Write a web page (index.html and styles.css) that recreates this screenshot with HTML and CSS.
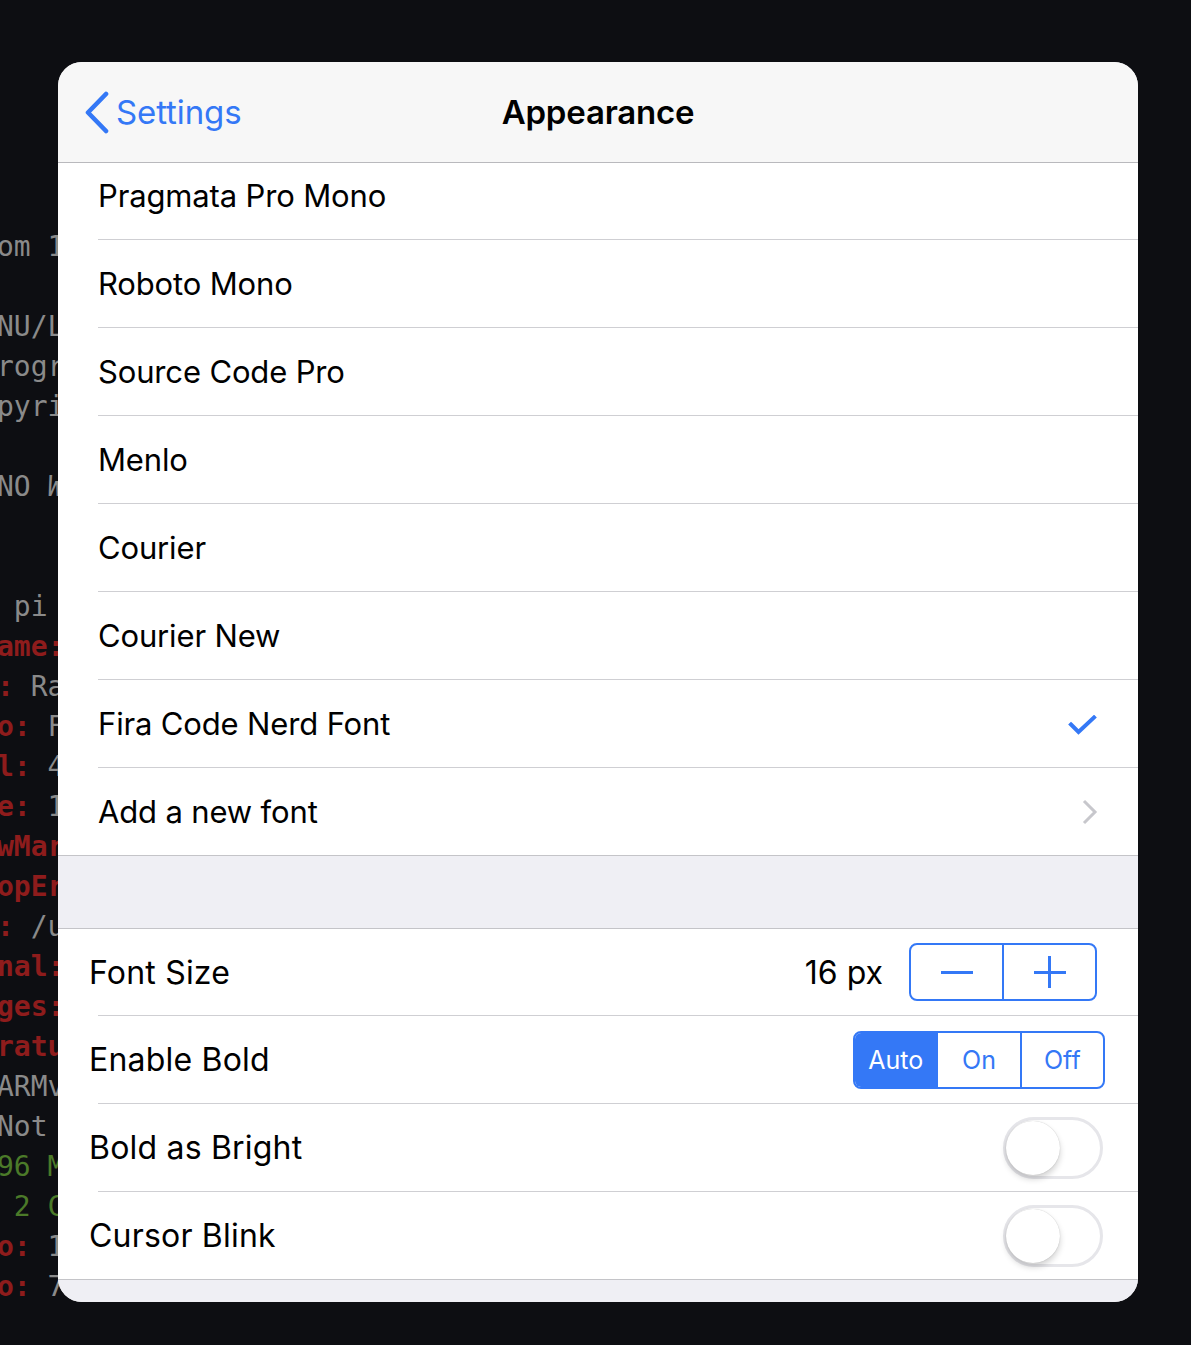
FILE: index.html
```html
<!DOCTYPE html>
<html>
<head>
<meta charset="utf-8">
<link rel="stylesheet" href="styles.css">
</head>
<body>
<div class="stage">
<div class="term"><div class="ln g">om 1</div><div class="ln"> </div><div class="ln g">NU/L</div><div class="ln g">rogr</div><div class="ln g">pyri</div><div class="ln"> </div><div class="ln g">NO <i>W</i></div><div class="ln"> </div><div class="ln"> </div><div class="ln g"> pi</div><div class="ln"><b class="r">ame:</b></div><div class="ln"><b class="r">:</b><span class="g"> Ra</span></div><div class="ln"><b class="r">o:</b><span class="g"> F</span></div><div class="ln"><b class="r">l:</b><span class="g"> 4</span></div><div class="ln"><b class="r">e:</b><span class="g"> 1</span></div><div class="ln"><b class="r">wMar</b></div><div class="ln"><b class="r">opEr</b></div><div class="ln"><b class="r">:</b><span class="g"> /u</span></div><div class="ln"><b class="r">nal:</b></div><div class="ln"><b class="r">ges:</b></div><div class="ln"><b class="r">ratu</b></div><div class="ln g">ARMv</div><div class="ln g">Not </div><div class="ln gr">96 M</div><div class="ln gr"> 2 C</div><div class="ln"><b class="r">o:</b><span class="g"> 1</span></div><div class="ln"><b class="r">o:</b><span class="g"> 7</span></div></div>

<div class="sheet">
  <div class="header">
    <div class="back">
      <svg class="back-chev" width="28" height="44" viewBox="0 0 28 44"><path d="M23 3 L5 21.5 L23 40" fill="none" stroke="#3478f6" stroke-width="4.6" stroke-linecap="round" stroke-linejoin="round"/></svg>
      <span class="back-label">Settings</span>
    </div>
    <div class="title">Appearance</div>
    <div></div>
  </div>

  <div class="list1">
    <div class="rows1">
      <div class="row"><span class="label">Pragmata Pro Mono</span></div>
      <div class="row"><span class="label">Roboto Mono</span></div>
      <div class="row"><span class="label">Source Code Pro</span></div>
      <div class="row"><span class="label">Menlo</span></div>
      <div class="row"><span class="label">Courier</span></div>
      <div class="row"><span class="label">Courier New</span></div>
      <div class="row"><span class="label">Fira Code Nerd Font</span>
        <svg class="check" width="30" height="24" viewBox="0 0 30 24"><path d="M3 9.5 L10.5 17 L26 2.5" fill="none" stroke="#3478f6" stroke-width="4" stroke-linecap="square" stroke-linejoin="miter"/></svg>
      </div>
      <div class="row last"><span class="label">Add a new font</span>
        <svg class="chev" width="18" height="28" viewBox="0 0 18 28"><path d="M3 3 L14 14 L3 25" fill="none" stroke="#c7c7cc" stroke-width="3"/></svg>
      </div>
    </div>
  </div>

  <div class="gap"></div>

  <div class="list2">
    <div class="row g2 first"><span class="label">Font Size</span>
      <span class="value">16 px</span>
      <div class="stepper">
        <div class="step"><span class="minus"></span></div>
        <div class="step"><span class="plus"></span></div>
      </div>
    </div>
    <div class="row g2"><span class="label">Enable Bold</span>
      <div class="seg">
        <div class="seg-item on">Auto</div>
        <div class="seg-item">On</div>
        <div class="seg-item">Off</div>
      </div>
    </div>
    <div class="row g2"><span class="label">Bold as Bright</span>
      <div class="switch"><span class="knob"></span></div>
    </div>
    <div class="row g2 last"><span class="label">Cursor Blink</span>
      <div class="switch"><span class="knob"></span></div>
    </div>
  </div>
  <div class="foot"></div>
</div>
</div>
</body>
</html>
```
FILE: styles.css
```css
html, body {
  margin: 0;
  padding: 0;
  background: #0d0e12;
}
.stage {
  display: grid;
  width: 1191px;
  height: 1345px;
  overflow: hidden;
  background: #0d0e12;
}
.term, .sheet {
  grid-area: 1 / 1;
}
.term {
  margin-top: 227px;
  margin-left: -3px;
  font-family: "DejaVu Sans Mono", "Liberation Mono", monospace;
  font-size: 28px;
  line-height: 40px;
  white-space: pre;
  color: #8a8a8a;
}
.term .ln { height: 40px; }
.term .g { color: #8a8a8a; }
.term .r { color: #8e1c1c; font-weight: bold; }
.term .gr { color: #4b7a29; }
.term i { font-style: italic; }

.sheet {
  align-self: start;
  justify-self: start;
  margin: 62px 0 0 58px;
  width: 1080px;
  height: 1240px;
  border-radius: 24px;
  overflow: hidden;
  background: #efeff4;
  display: flex;
  flex-direction: column;
  font-family: "Inter", "Roboto", "Liberation Sans", sans-serif;
  color: #000;
}
.header {
  height: 100px;
  flex: none;
  background: #f7f7f7;
  border-bottom: 1px solid #b9b9bd;
  display: grid;
  grid-template-columns: 1fr auto 1fr;
  align-items: center;
}
.back {
  display: flex;
  align-items: center;
  padding-left: 25px;
  color: #3478f6;
}
.back-chev { flex: none; margin-top: 1px; }
.back-label {
  font-size: 33px;
  margin-left: 5px;
  letter-spacing: -0.1px;
}
.title {
  font-size: 33px;
  font-weight: 600;
  letter-spacing: -0.2px;
  margin-top: -1px;
}
.list1 {
  height: 693px;
  flex: none;
  overflow: hidden;
  background: #fff;
}
.rows1 {
  margin-top: -11px;
}
.row {
  height: 88px;
  box-sizing: border-box;
  margin-left: 40px;
  border-bottom: 1px solid #cfcfd3;
  display: flex;
  align-items: center;
  background: #fff;
}
.row.last {
  margin-left: 0;
  padding-left: 40px;
  border-bottom-color: #c4c4c8;
}
.label {
  font-size: 31px;
  letter-spacing: -0.15px;
  flex: 1;
}
.check { margin-right: 40px; margin-top: 6px; }
.chev { margin-right: 39px; }

.gap {
  height: 72px;
  flex: none;
  background: #efeff4;
  border-bottom: 1px solid #c4c4c8;
}
.list2 {
  background: #fff;
  flex: none;
}
.row.g2.first { height: 87px; }
.row.g2 .label {
  margin-left: -9px;
  font-size: 32px;
  letter-spacing: 0.2px;
}
.value {
  font-size: 32px;
  margin-right: 26px;
}
.stepper {
  display: flex;
  width: 188px;
  height: 58px;
  box-sizing: border-box;
  border: 2px solid #3478f6;
  border-radius: 8px;
  margin-right: 41px;
}
.step {
  flex: 1;
  display: flex;
  align-items: center;
  justify-content: center;
  position: relative;
}
.step + .step { border-left: 2px solid #3478f6; }
.minus, .plus {
  display: block;
  width: 32px;
  height: 3px;
  background: #3478f6;
  position: relative;
}
.plus::after {
  content: "";
  position: absolute;
  left: 14.5px;
  top: -14.5px;
  width: 3px;
  height: 32px;
  background: #3478f6;
}
.seg {
  display: flex;
  width: 252px;
  height: 58px;
  box-sizing: border-box;
  border: 2px solid #3478f6;
  border-radius: 8px;
  overflow: hidden;
  margin-right: 33px;
}
.seg-item {
  flex: 1;
  display: flex;
  align-items: center;
  justify-content: center;
  font-size: 25px;
  color: #3478f6;
}
.seg-item + .seg-item { border-left: 2px solid #3478f6; }
.seg-item.on {
  background: #3478f6;
  color: #fff;
}
.switch {
  width: 100px;
  height: 62px;
  box-sizing: border-box;
  border: 3px solid #e6e6ea;
  border-radius: 31px;
  margin-right: 35px;
  position: relative;
  background: #fff;
}
.knob {
  position: absolute;
  left: 0;
  top: 1px;
  width: 54px;
  height: 54px;
  border-radius: 50%;
  background: #fff;
  box-shadow: 0 4px 6px rgba(0,0,0,0.18), 0 0 1px rgba(0,0,0,0.25);
}
.foot {
  flex: 1;
  background: #efeff4;
}
```
